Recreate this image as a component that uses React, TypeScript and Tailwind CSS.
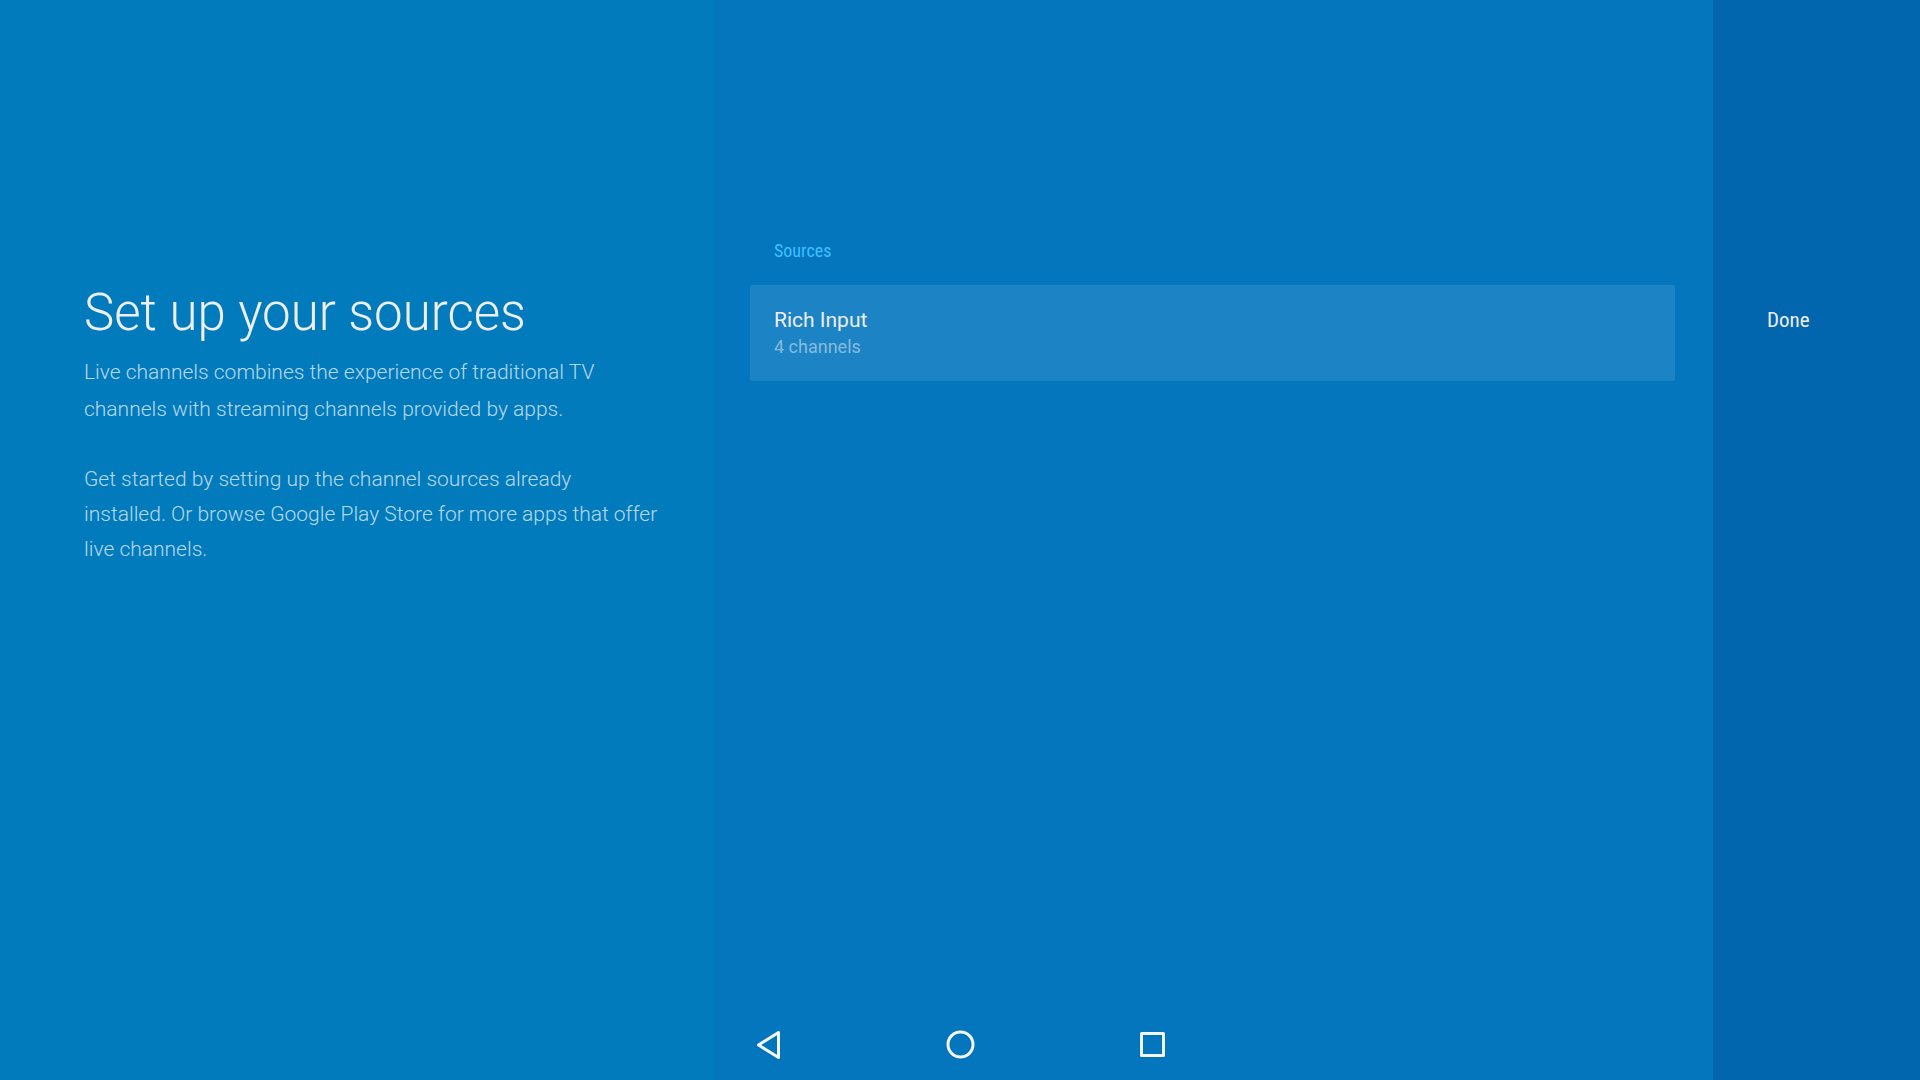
import type { ReactNode } from "react";

function NavButton({ label, children }: { label: string; children: ReactNode }) {
  return (
    <button type="button" aria-label={label} className="flex h-[72px] w-48 items-center justify-center">
      <svg viewBox="0 0 32 32" className="size-8 fill-none stroke-[#f2f6fa] stroke-3 drop-shadow-xs" strokeLinejoin="round">
        {children}
      </svg>
    </button>
  );
}

export default function App() {
  return (
    <div className="grid min-h-screen grid-cols-[minmax(0,714fr)_minmax(0,999fr)_minmax(0,207fr)] bg-[#0376bd] font-['Roboto',sans-serif] text-[#eeeeee]">
      <section className="col-start-1 row-start-1 bg-[#027bbd] pt-[280px] pr-8 pl-[84px]">
        <h1 className="text-[51px] leading-[66px] font-light">Set up your sources</h1>
        <p className="mt-2 text-[21px] leading-[37px] font-light text-[#b8d9ec]">
          Live channels combines the experience of traditional TV
          <br />
          channels with streaming channels provided by apps.
        </p>
        <p className="mt-[34px] text-[21px] leading-[35px] font-light text-[#b8d9ec]">
          Get started by setting up the channel sources already
          <br />
          installed. Or browse Google Play Store for more apps that offer
          <br />
          live channels.
        </p>
      </section>

      <main className="col-start-2 row-start-1 bg-[#0376bd] pt-[239px] pr-[38px] pl-9">
        <h2 className="pl-6 font-['Roboto_Condensed','Roboto',sans-serif] text-[18px] leading-6 text-[#40c0ff]">Sources</h2>
        <button type="button" className="mt-[22px] flex h-24 w-full flex-col items-start rounded-xs bg-[#1c83c4] px-6 pt-5 text-left">
          <span className="text-[21px] leading-[30px]">Rich Input</span>
          <span className="text-[18px] leading-6 text-[#86bbdf]">4 channels</span>
        </button>
      </main>

      <aside className="col-start-3 row-start-1 bg-[#0266af] pt-[305px] pl-[54px]">
        <button type="button" className="font-['Roboto_Condensed','Roboto',sans-serif] text-[21px] leading-[30px]">Done</button>
      </aside>

      <nav aria-label="System navigation" className="z-10 col-span-3 col-start-1 row-start-1 flex justify-center self-end">
        <NavButton label="Back">
          <path d="M26.5 4.5v25L6.5 17Z" />
        </NavButton>
        <NavButton label="Home">
          <circle cx="16.5" cy="16.5" r="12.5" />
        </NavButton>
        <NavButton label="Recent apps">
          <rect x="5.5" y="5.5" width="22" height="22" />
        </NavButton>
      </nav>
    </div>
  );
}
